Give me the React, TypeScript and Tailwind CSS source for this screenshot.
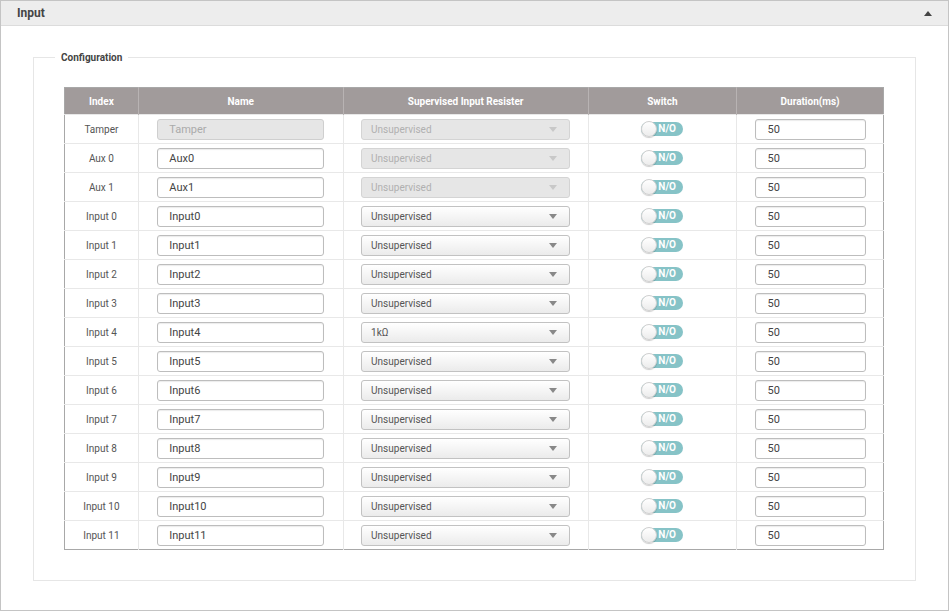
import React from "react";

const rows: { idx: string; name: string; res: string; disabled: boolean; nameDisabled: boolean }[] = [
  { idx: "Tamper", name: "Tamper", res: "Unsupervised", disabled: true, nameDisabled: true },
  { idx: "Aux 0", name: "Aux0", res: "Unsupervised", disabled: true, nameDisabled: false },
  { idx: "Aux 1", name: "Aux1", res: "Unsupervised", disabled: true, nameDisabled: false },
  ...Array.from({ length: 12 }, (_, i) => ({
    idx: `Input ${i}`,
    name: `Input${i}`,
    res: i === 4 ? "1kΩ" : "Unsupervised",
    disabled: false,
    nameDisabled: false,
  })),
];

function Toggle() {
  return (
    <div className="relative w-[42px] h-[14px] rounded-full bg-[#86c3c7] mx-auto">
      <div className="absolute left-0 top-[-1px] w-[16px] h-[16px] rounded-full bg-gradient-to-b from-white to-[#ececec] border border-[#d0d0d0] shadow-[0_1px_1px_rgba(0,0,0,0.2)]" />
      <span className="absolute left-[17px] top-0 leading-[14px] text-[10px] font-bold text-white">N/O</span>
    </div>
  );
}

export default function App() {
  return (
    <div
      className="w-[949px] h-[611px] border border-[#c4c4c4] bg-white box-border flex flex-col"
      style={{ fontFamily: "Roboto, 'Noto Sans', sans-serif" }}
    >
      <div className="h-[25px] bg-[#ededed] border-b border-[#dcdcdc] flex items-center justify-between pl-[16px] pr-[16px] shrink-0">
        <span className="text-[12px] font-bold text-[#444]">Input</span>
        <svg width="8" height="5" viewBox="0 0 8 5">
          <path d="M0 5 L4 0 L8 5 Z" fill="#444" />
        </svg>
      </div>
      <div className="pt-[24px] px-[32px]">
        <fieldset className="border border-[#e6e6e6] pl-[30px] pr-[30px] pb-[30px] pt-[22px] m-0 min-w-0">
          <legend className="-ml-[9px] px-[6px] text-[10px] font-bold text-[#444]">Configuration</legend>
          <table className="w-[820px] border-collapse border border-[#a8a8a8] text-[10px] text-[#555]">
            <colgroup>
              <col className="w-[74px]" />
              <col className="w-[205px]" />
              <col className="w-[245px]" />
              <col className="w-[149px]" />
              <col className="w-[147px]" />
            </colgroup>
            <thead>
              <tr className="h-[27px] bg-[#a19b9b] text-white font-bold text-[10px]">
                <th className="border-r border-[#b8b3b3] font-bold">Index</th>
                <th className="border-r border-[#b8b3b3] font-bold">Name</th>
                <th className="border-r border-[#b8b3b3] font-bold">Supervised Input Resister</th>
                <th className="border-r border-[#b8b3b3] font-bold">Switch</th>
                <th className="font-bold">Duration(ms)</th>
              </tr>
            </thead>
            <tbody>
              {rows.map((r) => (
                <tr key={r.idx} className="h-[29px] border-t border-[#e8e8e8]">
                  <td className="border-r border-[#e8e8e8] text-center">{r.idx}</td>
                  <td className="border-r border-[#e8e8e8]">
                    <div
                      className={
                        r.nameDisabled
                          ? "mx-auto w-[167px] h-[21px] rounded-[3px] border border-[#cfcfcf] bg-[#e6e6e6] text-[#aaa] text-[11px] leading-[19px] pl-[11px]"
                          : "mx-auto w-[167px] h-[21px] rounded-[3px] border border-[#bdbdbd] bg-white text-[#444] text-[11px] leading-[19px] pl-[11px] shadow-[inset_0_1px_1px_rgba(0,0,0,0.08)]"
                      }
                    >
                      {r.name}
                    </div>
                  </td>
                  <td className="border-r border-[#e8e8e8]">
                    <div
                      className={
                        r.disabled
                          ? "mx-auto w-[209px] h-[21px] rounded-[3px] border border-[#d4d4d4] bg-[#e6e6e6] text-[#b0b0b0] text-[10px] leading-[19px] pl-[9px] flex items-center justify-between pr-[12px]"
                          : "mx-auto w-[209px] h-[21px] rounded-[3px] border border-[#c2c2c2] bg-gradient-to-b from-white to-[#ebebeb] text-[#555] text-[10px] leading-[19px] pl-[9px] flex items-center justify-between pr-[12px]"
                      }
                    >
                      <span>{r.res}</span>
                      <svg width="8" height="5" viewBox="0 0 8 5">
                        <path d="M0 0 L8 0 L4 5 Z" fill={r.disabled ? "#c8c8c8" : "#888"} />
                      </svg>
                    </div>
                  </td>
                  <td className="border-r border-[#e8e8e8]">
                    <Toggle />
                  </td>
                  <td>
                    <div className="mx-auto w-[111px] h-[21px] rounded-[3px] border border-[#bdbdbd] bg-white text-[#444] text-[11px] leading-[19px] pl-[12px] shadow-[inset_0_1px_1px_rgba(0,0,0,0.08)]">
                      50
                    </div>
                  </td>
                </tr>
              ))}
            </tbody>
          </table>
        </fieldset>
      </div>
    </div>
  );
}
